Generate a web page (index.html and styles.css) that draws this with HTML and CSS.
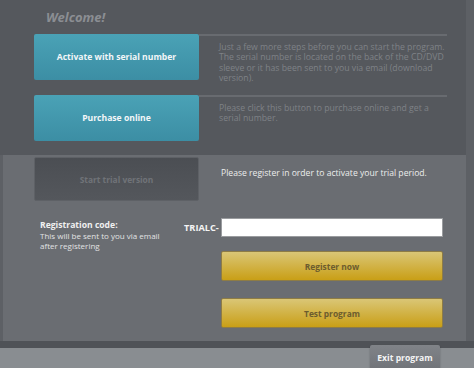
FILE: index.html
```html
<!DOCTYPE html>
<html lang="en">
<head>
  <meta charset="UTF-8" />
  <title>Welcome</title>
  <link rel="stylesheet" href="styles.css">
</head>
<body>
 <div class="window">

  <div class="top">
    <h1>Welcome!</h1>

    <div class="row">
      <button class="btn-teal">Activate with serial number</button>
      <p class="desc">Just a few more steps before you can start the program. The serial number is located on the back of the CD/DVD sleeve or it has been sent to you via email (download version).</p>
    </div>

    <div class="row row-second">
      <button class="btn-teal">Purchase online</button>
      <p class="desc">Please click this button to purchase online and get a serial number.</p>
    </div>
  </div>

  <!-- pannello versione di prova -->
  <div class="trial">
    <div class="trial-head">
      <button class="btn-trial" disabled>Start trial version</button>
      <p class="trial-info">Please register in order to activate your trial period.</p>
    </div>

    <div class="form">
      <div class="code-label">
        <strong>Registration code:</strong>
        <span>This will be sent to you via email<br>after registering</span>
      </div>
      <label class="prefix" for="code">TRIALC-</label>
      <input id="code" type="text" class="code-input">
      <button class="btn-gold btn-register">Register now</button>
      <button class="btn-gold btn-test">Test program</button>
    </div>
  </div>

  <div class="footer">
    <button class="btn-exit">Exit program</button>
  </div>

 </div>
</body>
</html>
```

FILE: styles.css
```css
body {
  margin: 0;
  background: #5d6065;
  font-family: "Open Sans", "DejaVu Sans", sans-serif;
  overflow: hidden;
}
.window {
  width: 474px;
  height: 368px;
  display: flex;
  flex-direction: column;
}
button {
  font-family: inherit;
  border: none;
  cursor: pointer;
  padding: 0;
  white-space: nowrap;
}

/* PARTE SUPERIORE */
.top {
  background: #55585d;
  width: 466px;
  height: 155px;
  flex: none;
  padding: 8px 0 0 34px;
  box-sizing: border-box;
}
h1 {
  margin: 0 0 8px 12px;
  font-size: 13px;
  font-style: italic;
  font-weight: bold;
  color: #8b8e93;
  line-height: 18px;
}
.row {
  display: flex;
  height: 46px;
}
.row-second {
  margin-top: 15px;
}
.btn-teal {
  width: 165px;
  height: 46px;
  flex: none;
  border-radius: 2px;
  background: linear-gradient(#4aa2b6, #3c8ea4);
  color: #f2f6f8;
  font-size: 8.6px;
  font-weight: bold;
}
.desc {
  margin: 0;
  width: 248px;
  border-top: 2px solid #686b70;
  padding: 6px 0 0 20px;
  box-sizing: border-box;
  font-size: 8.7px;
  line-height: 10.4px;
  color: #7f8287;
}

/* PANNELLO TRIAL */
.trial {
  background: #6a6d72;
  margin-left: 3px;
  width: 463px;
  height: 186px;
  flex: none;
  padding: 2px 0 0 31px;
  box-sizing: border-box;
}
.trial-head {
  display: flex;
  gap: 22px;
}
.btn-trial {
  width: 165px;
  height: 44px;
  flex: none;
  border-radius: 2px;
  background: linear-gradient(#4b4e53, #54575c);
  border: 1px solid #5e6166;
  color: #707378;
  font-size: 8.4px;
  font-weight: bold;
  cursor: default;
}
.trial-info {
  margin: 10px 0 0;
  font-size: 8.6px;
  color: #eceded;
}

.form {
  display: grid;
  grid-template-columns: 141px 34px 222px;
  column-gap: 3px;
  margin: 17px 0 0 6px;
  align-items: start;
}
.code-label {
  grid-row: 1 / 4;
  padding-top: 1px;
  display: flex;
  flex-direction: column;
  color: #f0f0f0;
  white-space: nowrap;
}
.code-label strong {
  font-size: 8.6px;
  line-height: 12px;
}
.code-label span {
  font-size: 8px;
  line-height: 10px;
  color: #e2e3e4;
}
.prefix {
  text-align: right;
  margin-top: 3px;
  font-size: 9.2px;
  font-weight: bold;
  color: #f4f4f4;
  white-space: nowrap;
}
.code-input {
  height: 19px;
  margin: 0;
  box-sizing: border-box;
  border: 1px solid #9a9c9f;
  background: #fff;
}
.btn-gold {
  grid-column: 3;
  height: 30px;
  border-radius: 2px;
  border: 1px solid #8e7c45;
  background: linear-gradient(#dac676, #c99f16);
  color: #6c5c2e;
  font-size: 8.4px;
  font-weight: bold;
}
.btn-register {
  margin-top: 14px;
}
.btn-test {
  margin-top: 17px;
}

/* FOOTER */
.footer {
  flex: 1;
  border-top: 7px solid #4f5257;
  background: #898d91;
  display: flex;
  justify-content: flex-end;
  padding-right: 34px;
}
.btn-exit {
  width: 70px;
  height: 26px;
  margin-top: -3px;
  border-radius: 2px;
  background: linear-gradient(#808388, #707378);
  box-shadow: 0 1px 2px rgba(0,0,0,0.25);
  color: #f4f4f4;
  font-size: 8.6px;
  font-weight: bold;
}
```
